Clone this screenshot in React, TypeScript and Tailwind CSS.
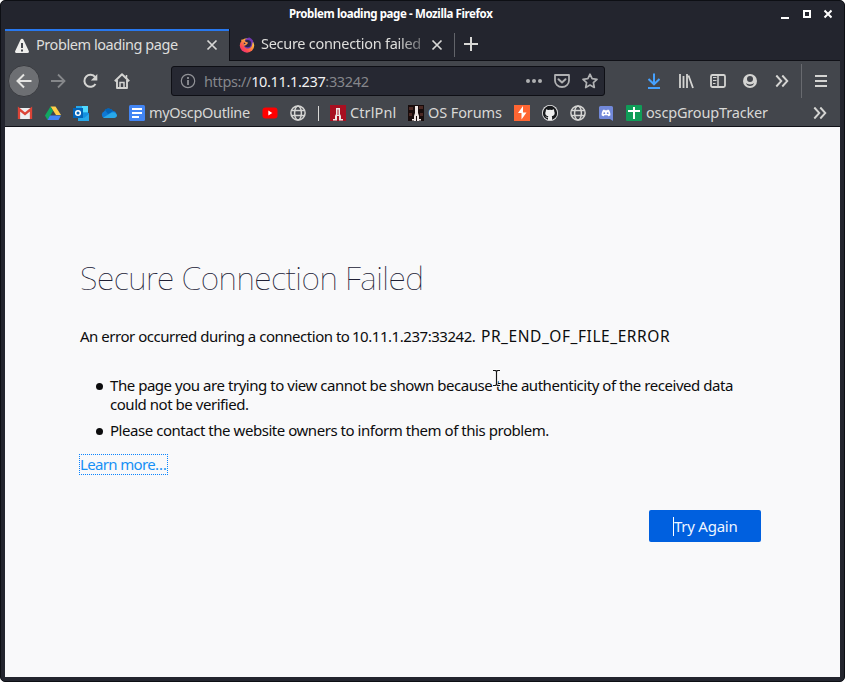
import type { ReactNode } from "react";

function Icon({ children, size = 16, className = "" }: { children: ReactNode; size?: number; className?: string }) {
  return (
    <svg width={size} height={size} viewBox="0 0 16 16" fill="none" className={"shrink-0 " + className}>
      {children}
    </svg>
  );
}

function Slot({ children }: { children: ReactNode }) {
  return <div className="flex w-8 shrink-0 items-center justify-center">{children}</div>;
}

function Firefox() {
  return (
    <Icon>
      <defs>
        <linearGradient id="fire" x1="14" y1="2" x2="3" y2="15" gradientUnits="userSpaceOnUse">
          <stop offset="0" stopColor="#fff04a" />
          <stop offset=".4" stopColor="#ff9a3c" />
          <stop offset=".75" stopColor="#ff4a50" />
          <stop offset="1" stopColor="#e52a80" />
        </linearGradient>
      </defs>
      <circle cx="8" cy="8.5" r="7.2" fill="url(#fire)" />
      <path d="M5.500 3.500C6.500 1.500 9 .5 10.500.4c2.8 1.400 4.300 4 4.200 6.600-.6-1.300-1.300-1.800-1.300-1.800.4 5-3 6.800-5.700 6.200C4.500 10.500 4 7 5.500 3.500Z" fill="#7137b0" />
      <circle cx="8.600" cy="6.600" r="3.600" fill="#292746" />
      <path d="M2.300 3.500C4 2.800 5.500 4 6 5.200l2 .8c-1 1.500-2.500 1.500-3 2.500" stroke="#ff9640" strokeWidth="1.500" />
    </Icon>
  );
}

function Globe() {
  return (
    <Icon>
      <g stroke="#d4d4d2" strokeWidth="1.500">
        <circle cx="8" cy="8" r="7.100" />
        <ellipse cx="8" cy="8" rx="3.400" ry="7.100" />
        <path d="M1.500 5.500h13M1.500 10.500h13" />
      </g>
    </Icon>
  );
}

function Close({ className = "" }: { className?: string }) {
  return (
    <Icon className={className}>
      <path d="m3.500 3.500 9 9m0-9-9 9" stroke="#d8d8d6" strokeWidth="1.700" />
    </Icon>
  );
}

function Chevrons() {
  return (
    <Icon>
      <path d="m2.300 2.500 5 5.500-5 5.500M8.300 2.500l5 5.500-5 5.500" stroke="#d4d4d2" strokeWidth="1.900" />
    </Icon>
  );
}

function TitleBar() {
  return (
    <header className="relative flex h-7 shrink-0 items-center justify-end pr-3">
      <h1 className="absolute left-[288px] top-[4px] whitespace-nowrap text-[11.5px] leading-[18px] font-bold tracking-[-0.39px] text-white">
        Problem loading page - Mozilla Firefox
      </h1>
      <svg width="52" height="10" viewBox="0 0 52 10" className="-mt-[2px]" stroke="#fff" strokeWidth="2" fill="none">
        <path d="M1 9h8M44.500 1.500l7 7m0-7-7 7" />
        <path d="M24 2h6v6h-6z" />
      </svg>
    </header>
  );
}

function Tabs() {
  return (
    <div className="flex h-8 shrink-0 border-b border-[#101117]">
      <div className="flex h-8 w-56 shrink-0 items-center border-t-2 border-[#2878ee] bg-[#43464c] pl-[9px]">
        <Icon className="-mt-px">
          <path d="M8 .8c.7 0 1.200.4 1.500 1l5.300 11.300c.5 1.100-.1 2-1.300 2h-11c-1.200 0-1.800-.9-1.300-2L6.500 1.800c.3-.6.8-1 1.500-1Z" fill="#eeeeec" />
          <path d="M8 5v5M8 11.500v2" stroke="#43464c" strokeWidth="2" />
        </Icon>
        <span className="-mt-[3px] ml-[6px] w-[168px] whitespace-nowrap text-[14.5px] tracking-[-0.44px] text-[#dededc]">Problem loading page</span>
        <Close className="-mt-[2px]" />
      </div>
      <div className="flex h-[31px] w-[225px] shrink-0 items-center border-l border-[#101117] pl-[9px] pt-px">
        <Firefox />
        <span className="-mt-[2px] ml-[6px] w-[163px] whitespace-nowrap text-[14.5px] tracking-[-0.28px] text-[#dededc] [mask-image:linear-gradient(to_right,black_84%,rgba(0,0,0,0.3)_100%)]">
          Secure connection failed
        </span>
        <Close className="ml-[5px]" />
      </div>
      <div className="mt-1 h-6 w-px bg-[#62646a]" />
      <Icon className="ml-[8px] mt-[7px]">
        <path d="M8 1v14M1 8h14" stroke="#d8d8d6" strokeWidth="2" />
      </Icon>
    </div>
  );
}

function NavBar() {
  return (
    <nav className="flex h-10 shrink-0 items-center pl-1 text-[#d4d4d2]">
      <button className="-ml-px mr-px flex size-8 shrink-0 items-center justify-center rounded-full border border-[#393b40] bg-[#6d6f73]">
        <Icon><path d="M15.500 8H1.500M8 1.500 1.500 8 8 14.500" stroke="#e4e4e2" strokeWidth="2" /></Icon>
      </button>
      <div className="ml-px flex">
        <Slot><Icon><path d="M1 8h13.500M8 1.500 14.500 8 8 14.500" stroke="#85878a" strokeWidth="1.800" /></Icon></Slot>
        <Slot><Icon><path d="M13.200 4.200A6 6 0 1 0 13.500 11" stroke="currentColor" strokeWidth="2" /><path d="M15.300 1v6.500H8.800Z" fill="currentColor" /></Icon></Slot>
        <Slot><Icon><path d="m.8 8.300 7.200-7 7.200 7M3 7v8h10V7" stroke="currentColor" strokeWidth="1.900" strokeLinejoin="round" /><path d="M6 14v-4.500h4V14M12.500 2v4" stroke="currentColor" strokeWidth="1.500" /></Icon></Slot>
      </div>
      <div className="ml-[33px] flex h-[30px] w-[434px] shrink-0 items-center rounded-[3px] border border-[#0e0f15] bg-[#262832] pl-[8px]">
        <Icon className="text-[#909196]"><circle cx="8" cy="8" r="6.700" stroke="currentColor" strokeWidth="1.200" /><path d="M8 7v5M8 4v2" stroke="currentColor" strokeWidth="1.800" /></Icon>
        <div className="ml-[8px] mt-px w-[322px] whitespace-nowrap text-[14.5px] tracking-[-0.35px] text-[#85868b]">
          https://<span className="text-[#f2f2f2]">10.11.1.237</span>:33242
        </div>
        <div className="flex gap-3 text-[#afb0b2]">
          <Icon><circle cx="2" cy="8" r="2" fill="currentColor" /><circle cx="8" cy="8" r="2" fill="currentColor" /><circle cx="14" cy="8" r="2" fill="currentColor" /></Icon>
          <Icon><path d="M1 2h14v5.500c0 3.500-3 6.500-7 6.500s-7-3-7-6.500Z" stroke="currentColor" strokeWidth="1.800" strokeLinejoin="round" /><path d="m4.500 6.200 3.500 3.300 3.500-3.300" stroke="currentColor" strokeWidth="2" strokeLinecap="round" strokeLinejoin="round" /></Icon>
          <Icon><path d="m8 1.200 2.100 4.500 4.900.6-3.600 3.300.9 4.900L8 12.100l-4.300 2.400.9-4.900L1 6.300l4.900-.6Z" stroke="currentColor" strokeWidth="1.700" strokeLinejoin="round" /></Icon>
        </div>
      </div>
      <div className="ml-[33px] flex">
        <Slot><Icon><path d="M8 .5V11M2.500 6 8 11.300 13.500 6M2 15h12" stroke="#45a1ff" strokeWidth="2" /></Icon></Slot>
        <Slot><Icon><path d="M2 1v14M5.500 3v12M9 1v14M10.500 2.500 15 15" stroke="currentColor" strokeWidth="1.800" /></Icon></Slot>
        <Slot><Icon><rect x="1" y="2" width="14" height="12" rx="1.500" stroke="currentColor" strokeWidth="1.800" /><path d="M8 2v12" stroke="currentColor" strokeWidth="1.500" /><path d="M3 4.500h3.500M3 7.500h3.500M3 10.500h2.500" stroke="currentColor" /></Icon></Slot>
        <Slot><Icon><circle cx="8" cy="8" r="7" fill="currentColor" /><circle cx="8" cy="6" r="3" fill="#43464c" /><path d="M3.700 9.800c1 1.200 2.500 1.700 4.300 1.700s3.300-.5 4.300-1.700c-.5 2-2.300 3.300-4.300 3.300s-3.800-1.300-4.300-3.300Z" fill="#43464c" /></Icon></Slot>
        <Slot><Chevrons /></Slot>
      </div>
      <div className="ml-[3px] h-[34px] w-px bg-[#686a6f]" />
      <Icon className="ml-[11px]"><path d="M2 3h12M2 8h12M2 13h12" stroke="currentColor" strokeWidth="2" /></Icon>
    </nav>
  );
}

function Tower({ dark = false }: { dark?: boolean }) {
  return (
    <Icon>
      <path d="M0 0h16v16H0z" fill={dark ? "#180c0c" : "#a80f20"} />
      {dark && <path d="M1 2h4v3H1zM11 1h4v3h-4zM1 8h3v3H1zM12 8h3v3h-3z" fill="#4c2924" />}
      <path
        d={dark ? "M7 1h3v7l1 3v5H9v-5H8v5H6v-5l1-3ZM4 14h3v1.500H4zM10 14h3v1.500h-3z" : "M6 3h4v6l1 2v4.500H9V11H7v4.500H5V11l1-2ZM3 14h3v1.500H3zM10 14h3v1.500h-3z"}
        fill="#eee6e4"
      />
      {!dark && <path d="M8 4.500V10" stroke="#a80f20" />}
    </Icon>
  );
}

function Bookmarks() {
  return (
    <div className="flex h-[25px] shrink-0 items-center whitespace-nowrap pb-px pl-3 text-[14.5px] text-[#d8d8d6]">
      <div className="flex gap-3">
        <Icon><path d="M1 3h14v11H1z" fill="#eceff1" /><path d="M2 14V4l6 5 6-5v10" stroke="#db4437" strokeWidth="2.300" /></Icon>
        <Icon><path d="M5.500 1.500h5L16 10h-5Z" fill="#ffcf48" /><path d="M5.500 1.500 8 6l-5.500 9L0 10.500Z" fill="#11a861" /><path d="M5 10.500h11L13.500 15h-11Z" fill="#4385f5" /></Icon>
        <Icon><path d="M3 1h12v12H3z" fill="#28a8ea" /><path d="M9 1h6v6H9z" fill="#50d9ff" /><path d="M5 8h11v8H5z" fill="#1490df" /><path d="m5 9 6 4 5-4v7H5Z" fill="#28a8ea" /><path d="M0 3h10v10H0z" fill="#0364b8" /><circle cx="5" cy="8" r="2.300" stroke="#fff" strokeWidth="1.500" /></Icon>
        <Icon><path d="M3 13a3.500 3.500 0 0 1 0-6.500A5 5 0 0 1 12 6a3.600 3.600 0 0 1 1 7Z" fill="#0f78d4" /><path d="M4 5c3-3 7-.5 8 1l-5 3Z" fill="#0364b8" /><path d="m2 12.800 7-4.300c4-3 7 .500 7 2S14.500 13 13 13H3Z" fill="#28a8ea" /></Icon>
        <Icon><rect width="16" height="16" rx="1.500" fill="#4285f4" /><path d="M3 4h10M3 8h10M3 12h7" stroke="#fff" strokeWidth="2" /></Icon>
      </div>
      <span className="-mt-px ml-1 w-[113px] tracking-[-0.34px]">myOscpOutline</span>
      <Icon><rect x=".5" y="2.500" width="15" height="11" rx="3" fill="#f00" /><path d="m6.300 5.500 4 2.500-4 2.500Z" fill="#fff" /></Icon>
      <div className="ml-3 flex w-10 shrink-0 items-center"><Globe /><span className="ml-[12px] h-[15px] w-px bg-[#d8d8d6]" /></div>
      <Tower />
      <span className="-mt-px ml-1 w-[58px] tracking-[0.1px]">CtrlPnl</span>
      <Tower dark />
      <span className="-mt-px ml-1 w-[86px] tracking-[-0.1px]">OS Forums</span>
      <div className="flex gap-3">
        <Icon><path d="M0 0h16v16H0z" fill="#ff6633" /><path d="M9 1 4 8h3.500v6.500l5-7H9Z" fill="#fff" /></Icon>
        <Icon>
          <circle cx="8" cy="8" r="8" fill="#eee" />
          <circle cx="8" cy="8" r="7.200" fill="#17191c" />
          <path d="M4 4.200 6.200 5q1.800-.5 3.600 0L12 4.200l.2 2c1.300 3-.2 4.600-2.500 4.900.5.600.4 2 .4 4H6v-2.300C4.500 13 4 12 3 11.300c1.300 0 1.600 1.200 3 1 0-.6.1-.9.400-1.200C4 10.800 2.500 9.200 3.800 6.200Z" fill="#eee" />
        </Icon>
        <Globe />
        <Icon><path d="M1 2.500Q1 1 2.500 1h11Q15 1 15 2.500V16l-3-2H2.500Q1 14 1 12.500Z" fill="#7289da" /><path d="m5 5 1.200-.5.500.7h2.600l.5-.7L11 5c1 1.500 1.500 3.300 1.400 5.200-.8.700-1.500 1-2.200 1.100l-.6-1H6.400l-.6 1c-.7-.1-1.400-.4-2.200-1.100C3.500 8.300 4 6.500 5 5Z" fill="#fff" /><circle cx="6.300" cy="8.200" r=".9" fill="#7289da" /><circle cx="9.700" cy="8.200" r=".9" fill="#7289da" /></Icon>
      </div>
      <Icon className="ml-3"><rect width="16" height="16" rx="1" fill="#0f9d58" /><path d="M2 6h12M8 2v12" stroke="#fff" strokeWidth="2" /></Icon>
      <span className="-mt-px ml-1 w-[166px] tracking-[-0.17px]">oscpGroupTracker</span>
      <Chevrons />
    </div>
  );
}

function ErrorPage() {
  return (
    <main className="flex-1 bg-[#f9f9fa] pl-[75px] pr-[79px] pt-[128px] text-[15px] leading-[19px] tracking-[-0.46px] text-[#0c0c0d]">
      <h2 className="whitespace-nowrap text-[32px] leading-[46px] font-thin tracking-[-0.5px] text-[#202035]">Secure Connection Failed</h2>
      <p className="mt-[26px] flex whitespace-nowrap">
        <span className="w-[272px] tracking-[-0.48px]">An error occurred during a connection to</span>
        <span className="w-[129px]">10.11.1.237:33242.</span>
        <span className="text-[15.5px] tracking-[0.55px]">PR_END_OF_FILE_ERROR</span>
      </p>
      <ul className="mt-[30px] pl-[30px]">
        <li className="relative whitespace-nowrap before:absolute before:-left-[14px] before:top-[7px] before:size-[7px] before:rounded-full before:bg-[#0c0c0d]">
          The page you are trying to view cannot be shown because the authenticity of the received data<br />could not be verified.
        </li>
        <li className="relative mt-[7px] whitespace-nowrap before:absolute before:-left-[14px] before:top-[7px] before:size-[7px] before:rounded-full before:bg-[#0c0c0d]">
          Please contact the website owners to inform them of this problem.
        </li>
      </ul>
      <a className="-ml-px mt-[14px] flex h-[21px] w-[89px] items-center whitespace-nowrap border border-dotted border-[#0a84ff] tracking-[-0.65px] text-[#1690f5]">Learn more…</a>
      <div className="mt-[35px] flex justify-end">
        <button className="relative flex h-8 w-28 items-center whitespace-nowrap rounded-[2px] bg-[#0060df] pl-[25px] tracking-[-0.25px] text-[#eef5ff]">
          <span className="absolute left-6 top-[7px] h-[19px] w-px bg-white" />
          Try Again
        </button>
      </div>
    </main>
  );
}

export default function App() {
  return (
    <div className="relative h-[682px] w-[845px] bg-white font-['Noto_Sans',sans-serif]">
      <div className="flex h-full flex-col overflow-hidden rounded-[5px] border border-[#0d0f14] bg-[#23252e]">
        <TitleBar />
        <div className="mx-1 mb-1 flex min-h-0 flex-1 flex-col">
          <Tabs />
          <div className="flex shrink-0 flex-col border-b border-[#101117] bg-[#43464c]">
            <NavBar />
            <Bookmarks />
          </div>
          <ErrorPage />
        </div>
      </div>
      <svg width="9" height="18" viewBox="0 0 9 18" className="absolute left-[492px] top-[369px]" fill="none">
        <path d="M1 1.500h7M4.500 1v16M1 16.500h7" stroke="#fff" strokeWidth="2.500" />
        <path d="M1 1.500h2.500l1 1 1-1H8M4.500 2v14M1 16.500h2.500l1-1 1 1H8" stroke="#161616" strokeWidth="1.200" />
      </svg>
    </div>
  );
}
